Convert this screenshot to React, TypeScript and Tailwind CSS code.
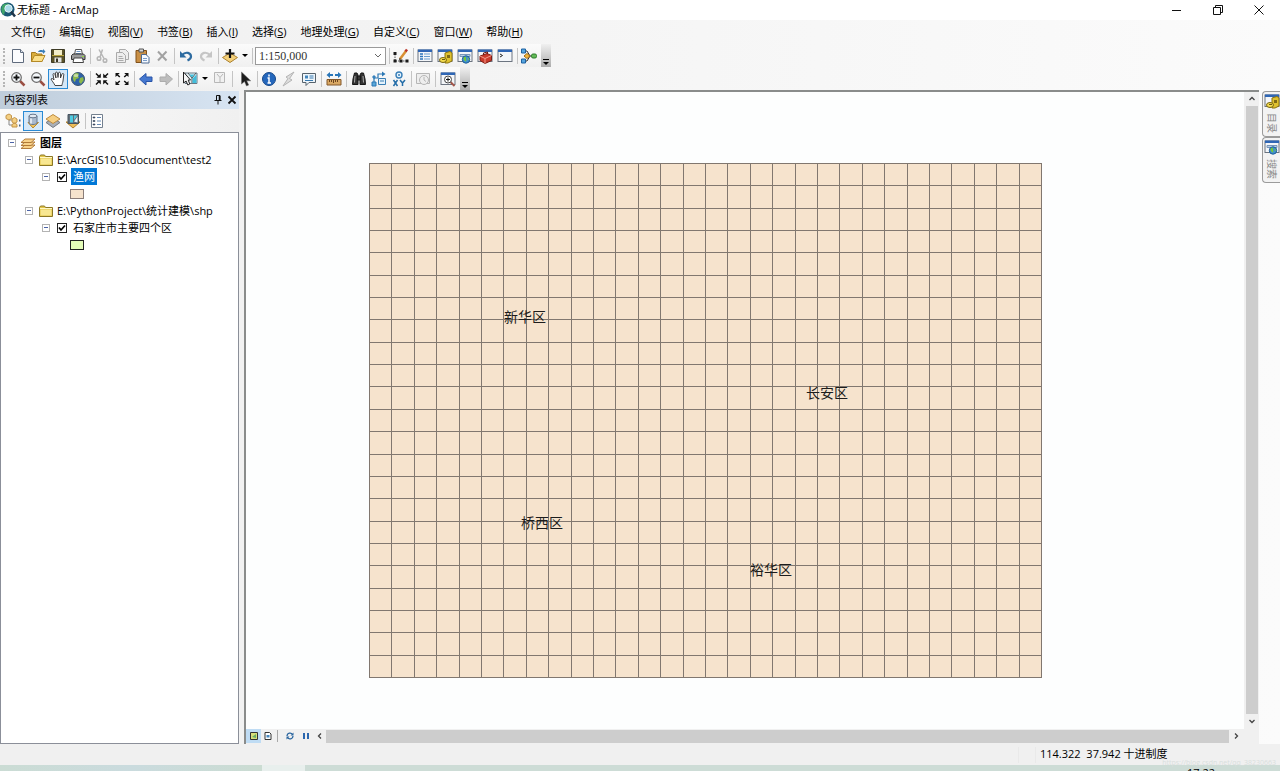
import { Fragment, type ReactNode } from "react";

const menus = [
  { label: "文件", key: "F" },
  { label: "编辑", key: "E" },
  { label: "视图", key: "V" },
  { label: "书签", key: "B" },
  { label: "插入", key: "I" },
  { label: "选择", key: "S" },
  { label: "地理处理", key: "G" },
  { label: "自定义", key: "C" },
  { label: "窗口", key: "W" },
  { label: "帮助", key: "H" },
];

const Icon = ({ children }: { children: ReactNode }) => (
  <svg viewBox="0 0 16 16" className="w-4 h-4 shrink-0" aria-hidden="true">
    {children}
  </svg>
);

const WindowFrame = () => (
  <>
    <rect x="1" y="2" width="14" height="11.5" fill="#f4f6f9" stroke="#6c7480" />
    <rect x="1" y="1.5" width="14" height="2.5" fill="#2f66b5" />
  </>
);

const icons: Record<string, ReactNode> = {
  new: (
    <>
      <path d="M2.500 1.500h8l3 3v10h-11z" fill="#fbfcfe" stroke="#5f6b7d" />
      <path d="M10.500 1.500v3h3" fill="#dfe6ef" stroke="#5f6b7d" />
    </>
  ),
  open: (
    <>
      <path d="M1.500 13.500V4.500h4l1.500 1.500h5v7.500z" fill="#d9ad3c" stroke="#a47a1c" />
      <path d="M1.500 13.500l3-6h10.500l-3 6z" fill="#fbe08a" stroke="#b58a26" />
      <path d="M8 4c1-2 3-2.500 5-1.500V1l2.500 2.500L13 6V4.500c-2-.8-3.500-.5-5-.5z" fill="#3b7fb8" />
    </>
  ),
  save: (
    <>
      <path d="M1.500 1.500h13v13h-13z" fill="#5b5328" stroke="#3d3a25" />
      <path d="M4 2h8v5H4z" fill="#f3edc9" />
      <path d="M4.500 9.500h7v5h-7z" fill="#e4e4e4" />
      <path d="M6 10.500h2v3.500H6z" fill="#38351f" />
      <path d="M2 7.500h12" stroke="#b8a43c" />
    </>
  ),
  print: (
    <>
      <path d="M4.500 7l1-5.500h6l1 5.500z" fill="#fff" stroke="#555" />
      <path d="M6.500 3.500h4M6 5.500h5" stroke="#6b95c6" />
      <path d="M1.500 7.500L3 6h10.500l1.500 1.500v4h-13.500z" fill="#9b9b9b" stroke="#333" />
      <path d="M4 10h8.500l1 4.500H3z" fill="#fff" stroke="#444" />
      <path d="M12 8.500h2" stroke="#8edb3a" />
    </>
  ),
  cut: (
    <g fill="none" stroke="#b5b5b5" strokeWidth="1.500">
      <path d="M5 1.500l5 9M8.500 1.500L6 9" />
      <circle cx="5" cy="10.500" r="1.800" />
      <circle cx="11" cy="12.500" r="1.800" />
    </g>
  ),
  copy: (
    <g fill="#eee" stroke="#aaa">
      <path d="M5.500 1.500h6l3 3v7h-9z" />
      <path d="M2.500 4.500h6l3 3v7h-9z" />
      <path d="M4.500 8.500h4M4.500 10.500h5M4.500 12.500h5" />
    </g>
  ),
  paste: (
    <>
      <path d="M2 2.500h10.500v12H2z" fill="#c98f45" stroke="#80511b" />
      <path d="M5 1h4.500v3H5z" fill="#d7d7d7" stroke="#555" />
      <path d="M7.500 6.500h4.500l3 3v5.500H7.500z" fill="#f5f9ff" stroke="#4e6a91" />
      <path d="M9 10.500h4M9 12.500h4" stroke="#7a9dc9" />
    </>
  ),
  remove: <path d="M4 3.500l8.500 9M12.500 3.500L4 12.500" stroke="#a2a2a2" strokeWidth="2" />,
  undo: (
    <>
      <path d="M4 7c4-4 9-2 9 1.500 0 2-1.500 3-3.500 4" fill="none" stroke="#2d6ba0" strokeWidth="2.200" />
      <path d="M2 3v6.500h6.500z" fill="#2d6ba0" />
    </>
  ),
  redo: (
    <>
      <path d="M12 7c-4-4-9-2-9 1.500 0 2 1.500 3 3.500 4" fill="none" stroke="#c5c5c5" strokeWidth="2.200" />
      <path d="M14 3v6.500H7.500z" fill="#c5c5c5" />
    </>
  ),
  addData: (
    <>
      <path d="M8 5l7.500 4.500L8 14.500.5 9.500z" fill="#f3cf78" stroke="#ab8130" />
      <path d="M8 1v9M3.500 5.500h9" stroke="#111" strokeWidth="2.200" />
    </>
  ),
  editor: (
    <>
      <path d="M2 6v7h12" fill="none" stroke="#555" strokeDasharray="1.500 1" />
      <path d="M.5 4h3v3h-3zM.5 11.500h3v3h-3zM6.500 11.500h3v3h-3zM12.500 11.500h3v3h-3z" fill="#1b1b1b" />
      <path d="M7 11l6-8" stroke="#d99033" strokeWidth="2.500" />
      <path d="M12.500 3.500L14 1.500" stroke="#bb3327" strokeWidth="2.500" />
      <path d="M6 12l.5-2 1.500 1z" fill="#222" />
    </>
  ),
  contents: (
    <>
      <WindowFrame />
      <path d="M3 6h3M3 8.500h3M3 11h3" stroke="#2c76bc" strokeWidth="1.500" />
      <path d="M7 6h6M7 8.500h6M7 11h6" stroke="#6a9fd0" />
    </>
  ),
  catalog: (
    <>
      <WindowFrame />
      <path d="M8 5l5-1.500 2 1.500v8l-4 2H8z" fill="#e0c22f" stroke="#8b7410" />
      <path d="M10 7h3v3h-3z" fill="#806b16" />
      <ellipse cx="6" cy="12" rx="3.500" ry="2.500" fill="#f4dc4f" stroke="#77640f" />
      <path d="M5 11.500h3" stroke="#6c5a0c" />
    </>
  ),
  search: (
    <>
      <WindowFrame />
      <path d="M3 6.500h10v2H3z" fill="#bcd1e8" stroke="#7795b9" />
      <circle cx="9" cy="11.500" r="3.700" fill="#3f90d0" stroke="#1e5e98" />
      <path d="M6.500 10c1-2 3-1 2.500 0s1 2 0 3.500C7.500 13 6.500 12 6.500 10zM10.500 9l1.500 2-1 1.500z" fill="#74c63d" />
    </>
  ),
  toolbox: (
    <>
      <WindowFrame />
      <path d="M3 8l7-2.500 4.500 2v5L8 15.500l-5-3z" fill="#c93a2b" stroke="#7d1d14" />
      <path d="M3 8l5 2.500 6.500-3M8 10.500v5" fill="none" stroke="#f19a8d" />
      <path d="M6.500 7V5l4-1v2" fill="none" stroke="#6e1912" />
    </>
  ),
  python: (
    <>
      <WindowFrame />
      <path d="M3 6l2.500 1.500L3 9" fill="none" stroke="#222" />
    </>
  ),
  model: (
    <>
      <path d="M3 3h3l3 5H3M3 13h3l3-5h3" fill="none" stroke="#333" />
      <path d="M.5 1h4v4h-4zM.5 11h4v4h-4z" fill="#55a4de" stroke="#1e62a2" />
      <path d="M3 8l3-2.500L9 8l-3 2.500z" fill="#efb63d" stroke="#a76c13" />
      <rect x="10.500" y="6" width="5" height="4" rx="1.500" fill="#62b957" stroke="#2c7d2a" />
    </>
  ),
  zoomIn: (
    <>
      <path d="M10 10l4.500 4.500" stroke="#9b5044" strokeWidth="2.500" />
      <circle cx="6.500" cy="6.500" r="4.800" fill="#f5f8fb" stroke="#6a6a6a" strokeWidth="1.200" />
      <path d="M6.500 3.500v6M3.500 6.500h6" stroke="#111" strokeWidth="1.800" />
    </>
  ),
  zoomOut: (
    <>
      <path d="M10 10l4.500 4.500" stroke="#9b5044" strokeWidth="2.500" />
      <circle cx="6.500" cy="6.500" r="4.800" fill="#f5f8fb" stroke="#6a6a6a" strokeWidth="1.200" />
      <path d="M3.500 6.500h6" stroke="#111" strokeWidth="1.800" />
    </>
  ),
  pan: (
    <path
      d="M5 14.500C4 12 1.500 9.500 1 8c.5-1 2-.5 3 1L3 3.500c0-1.300 1.500-1.300 2 0L6 7l-.5-5c.2-1.300 1.800-1.200 2 0L8 6.500 8.500 2c.3-1.200 1.800-1 2 .3L10.500 7l1.500-4c.5-1 1.800-.6 1.800.5L13 10c-.3 2-1 3-1 4.500z"
      fill="#fff"
      stroke="#333"
      strokeWidth=".9"
    />
  ),
  globe: (
    <>
      <circle cx="8" cy="8" r="6.500" fill="#2f62a8" stroke="#3c5570" />
      <path d="M4 3c2-1.500 4-1 5 0l-1 2 1 2-3 1-1 3C3 9.500 2 7 4 3zM10 7l3-1 .8 3-2.800 4-2-2z" fill="#8db94b" />
      <ellipse cx="6" cy="4.500" rx="2.500" ry="1.500" fill="#fff" opacity=".5" />
    </>
  ),
  fixedIn: (
    <g stroke="#111" fill="#111">
      <path d="M2 2.500L5 5.500M14 2.500L11 5.500M2 13.500L5 10.500M14 13.500L11 10.500" strokeWidth="1.500" />
      <path d="M6.800 2.500v4.300H2.500zM9.200 2.500v4.300H13.500zM6.800 13.500V9.200H2.500zM9.200 13.500V9.200H13.500z" stroke="none" />
    </g>
  ),
  fixedOut: (
    <g stroke="#111" fill="#111">
      <path d="M3 3.500L5.800 6M13 3.500L10.200 6M3 12.500L5.800 10M13 12.500L10.200 10" strokeWidth="1.500" />
      <path d="M1.500 6V2h4.300zM14.500 6V2h-4.300zM1.500 10v4h4.300zM14.500 10v4h-4.300z" stroke="none" />
    </g>
  ),
  back: <path d="M1.500 8L8 2.500V6h6v4.500H8v3.500z" fill="#4477cf" stroke="#2854a8" />,
  forward: <path d="M14.500 8L8 2.500V6H2v4.500h6v3.500z" fill="#bdbdbd" stroke="#acacac" />,
  selectFeatures: (
    <>
      <path d="M3 2h12v10.500H3z" fill="#e3eef2" stroke="#687985" />
      <path d="M6 2l4 5 4-5M10 7v5" fill="none" stroke="#555" />
      <path d="M7 3.500h5.500L10 6.500zM10.500 7.500l4-4v8.500h-4z" fill="#42bddb" />
      <path d="M1.500 1l7 8H6.200l1.600 4-2 1-1.700-4-2.600 2z" fill="#f6f6f6" stroke="#222" />
    </>
  ),
  clearSelection: (
    <g fill="#f1f1f1" stroke="#b7b7b7">
      <path d="M2.500 1.500h10v10h-10z" />
      <path d="M5 3l3 3.500L11 3M8 6.500v5" fill="none" />
    </g>
  ),
  selectElements: <path d="M4.500 1v12l3-2.500 2 4.500 2.200-1-2-4.200h4z" fill="#1c1c1c" stroke="#666" strokeWidth=".5" />,
  identify: (
    <>
      <circle cx="8" cy="8" r="6.500" fill="#2567bc" stroke="#174889" />
      <path d="M8 3.500v2M6.500 7H8v5M6.500 12h3.500" fill="none" stroke="#fff" strokeWidth="1.500" />
    </>
  ),
  hyperlink: <path d="M13 1L5 6l2 1.500L2 15l9-6-2.500-1.500L13 1z" fill="#dedede" stroke="#b4b4b4" />,
  htmlPopup: (
    <>
      <path d="M1.500 2.500h13v9H8l-3 3v-3H1.500z" fill="#edf5fb" stroke="#56626c" />
      <path d="M4 4.500h3v3H4z" fill="#4386bd" />
      <path d="M8.500 5h4M8.500 7h4M4 9.500h8" stroke="#397ab0" />
    </>
  ),
  measure: (
    <>
      <path d="M1 8.500h14v5.500H1z" fill="#d9a864" stroke="#84582a" />
      <path d="M3.500 9v2M5.500 9v2M7.500 9v3M9.500 9v2M11.500 9v2" stroke="#6a421c" />
      <path d="M.5 4L4 1v2h3v2H4v2zM15.500 4L12 1v2H9v2h3v2z" fill="#2875b8" />
    </>
  ),
  find: (
    <g fill="#333" stroke="#171717">
      <path d="M3.500 2h2.500l1 2v9.500H1.500L2 8zM12.500 2H10L9 4v9.500h5.500L14 8z" />
      <path d="M6.500 5h3v4h-3z" />
      <path d="M4 5L3.500 11.500M12 5l.5 6.500" stroke="#aaa" />
    </g>
  ),
  findRoute: (
    <>
      <path d="M3 13V7h4V3h5" fill="none" stroke="#2b77b4" strokeWidth="1.200" />
      <path d="M1 11h4v4H1zM2 5h2v2H2z" fill="#5aa7d8" stroke="#2b77b4" />
      <path d="M11 .5L14.500 3 11 5.500z" fill="#2b77b4" />
      <path d="M7.500 7.500h7v6h-7z" fill="#e3f1fb" stroke="#397eb4" />
      <path d="M9 10h4" stroke="#397eb4" />
    </>
  ),
  goToXY: (
    <>
      <circle cx="8" cy="4" r="3" fill="#eaf5fd" stroke="#397fb8" strokeWidth="1.400" />
      <circle cx="8" cy="4" r="1" fill="#397fb8" />
      <path d="M2.500 9l4 6M6.500 9l-4 6M9 9l2.500 3L14 9M11.500 12v3" fill="none" stroke="#246da8" strokeWidth="1.500" />
    </>
  ),
  timeSlider: (
    <g fill="#eee" stroke="#b6b6b6">
      <path d="M1.500 2.500h13v10h-13z" />
      <circle cx="9" cy="9" r="4.500" />
      <path d="M9 6V9l2 1.500" fill="none" />
    </g>
  ),
  viewer: (
    <>
      <WindowFrame />
      <path d="M10 10.500l4.500 4.500" stroke="#a3564a" strokeWidth="2" />
      <circle cx="8" cy="8.500" r="3.500" fill="#fff" stroke="#444" />
      <path d="M8 6.500v4M6 8.500h4" stroke="#111" />
    </>
  ),
  listOrder: (
    <>
      <path d="M4 4v8h4M4 7h4" fill="none" stroke="#888" />
      <path d="M1 2.500L4 1l2.500 1.500v3L4 7 1 5.500zM7 6l2.500-1.500L12 6v3l-2.500 1.500L7 9zM7 11.500l2.500-1.500 2.500 1.500V14H7z" fill="#f4cf82" stroke="#c39549" />
      <path d="M14 7.500h1.500M14 12.500h1.500" stroke="#44658c" strokeWidth="2" />
    </>
  ),
  listSource: (
    <>
      <path d="M3 9.500h10.500L8 15z" fill="#f0c35a" stroke="#b98a2e" />
      <path d="M4 3v7c1.500 2 6.500 2 8 0V3z" fill="#a9b9cd" stroke="#68798f" />
      <ellipse cx="8" cy="3" rx="4" ry="1.800" fill="#e3eaf3" stroke="#68798f" />
      <path d="M6 5.500v5" stroke="#f3f6fa" strokeWidth="1.500" />
    </>
  ),
  listVisible: (
    <>
      <path d="M1 9.500l7-4 7 4L8 14.500z" fill="#a9afb7" stroke="#767b83" />
      <path d="M1 6l7-4.500L15 6l-7 4.500z" fill="#f6cf82" stroke="#bd8b3f" />
    </>
  ),
  listSelection: (
    <>
      <path d="M1 9h14l-7 6z" fill="#edbd59" stroke="#b4822d" />
      <path d="M3 1.500h10.500v9H3z" fill="#626e79" stroke="#465460" />
      <path d="M5 2.500h3v7H5zM9 2.500h3.500L9 7z" fill="#4ccce2" />
      <path d="M9 8.500l3.500-5v6z" fill="#e9f2f5" />
    </>
  ),
  options: (
    <>
      <path d="M2.500 1.500h11v13h-11z" fill="#fff" stroke="#73808f" />
      <path d="M4 4h2v1H4zM4 7.500h2v1H4zM4 11h2v1H4z" fill="#3c4c61" stroke="#3c4c61" strokeWidth=".6" />
      <path d="M8 4.500h4M8 8h4M8 11.500h4" stroke="#6589b4" />
    </>
  ),
  layers: (
    <g fill="#f8d28a" stroke="#aa7230" strokeWidth=".9">
      <path d="M1 13.500l4-3.500h10l-4 3.500z" />
      <path d="M1 10.500L5 7h10l-4 3.500z" />
      <path d="M1 7.500L5 4h10l-4 3.500z" />
    </g>
  ),
  folder: (
    <>
      <path d="M1.500 13.500v-9l1-1.500h4l1 1.500h7v9z" fill="#e2c548" stroke="#8b7726" />
      <path d="M2.500 6.500h11v6h-11z" fill="#f8e792" />
      <path d="M2 5.500h12" stroke="#fff7c5" />
    </>
  ),
};

type ToolItem = { icon?: string; label?: string; kind?: "sep" | "wideSep" | "arrow" | "scale"; active?: boolean };
const sep: ToolItem = { kind: "sep" };
const wideSep: ToolItem = { kind: "wideSep" };

const standardTools: ToolItem[] = [
  { icon: "new", label: "新建" },
  { icon: "open", label: "打开" },
  { icon: "save", label: "保存" },
  { icon: "print", label: "打印" },
  sep,
  { icon: "cut", label: "剪切" },
  { icon: "copy", label: "复制" },
  { icon: "paste", label: "粘贴" },
  { icon: "remove", label: "删除" },
  sep,
  { icon: "undo", label: "撤消" },
  { icon: "redo", label: "恢复" },
  sep,
  { icon: "addData", label: "添加数据" },
  { kind: "arrow", label: "添加数据选项" },
  sep,
  { kind: "scale" },
  sep,
  { icon: "editor", label: "编辑器工具条" },
  sep,
  { icon: "contents", label: "内容列表" },
  { icon: "catalog", label: "目录" },
  { icon: "search", label: "搜索" },
  { icon: "toolbox", label: "ArcToolbox" },
  { icon: "python", label: "Python" },
  sep,
  { icon: "model", label: "模型构建器" },
];

const navigationTools: ToolItem[] = [
  { icon: "zoomIn", label: "放大" },
  { icon: "zoomOut", label: "缩小" },
  { icon: "pan", label: "平移", active: true },
  { icon: "globe", label: "全图" },
  sep,
  { icon: "fixedIn", label: "固定比例放大" },
  { icon: "fixedOut", label: "固定比例缩小" },
  sep,
  { icon: "back", label: "返回" },
  { icon: "forward", label: "前进" },
  sep,
  { icon: "selectFeatures", label: "选择要素" },
  { kind: "arrow", label: "选择方式" },
  { icon: "clearSelection", label: "清除所选要素" },
  wideSep,
  { icon: "selectElements", label: "选择元素" },
  sep,
  { icon: "identify", label: "识别" },
  { icon: "hyperlink", label: "超链接" },
  { icon: "htmlPopup", label: "HTML 弹出窗口" },
  wideSep,
  { icon: "measure", label: "测量" },
  wideSep,
  { icon: "find", label: "查找" },
  { icon: "findRoute", label: "查找路径" },
  { icon: "goToXY", label: "转到 XY" },
  sep,
  { icon: "timeSlider", label: "时间滑块" },
  wideSep,
  { icon: "viewer", label: "创建查看器窗口" },
];

const Separator = ({ wide }: { wide?: boolean }) => (
  <span className={`flex justify-center shrink-0 ${wide ? "w-[5px]" : "w-1"}`}>
    <span className="w-px h-4 bg-[#c4c4c4]" />
  </span>
);

const ToolButton = ({ icon, label, active }: ToolItem) => (
  <button
    aria-label={label}
    className={`w-5 h-5 flex items-center justify-center shrink-0 ${
      active ? "bg-[#d5e8f8] border border-[#2a8ad4]" : ""
    }`}
  >
    <Icon>{icons[icon!]}</Icon>
  </button>
);

const ScaleSelect = () => (
  <div className="relative mx-px">
    <select
      aria-label="地图比例"
      className="block appearance-none w-[131px] h-[18px] pl-[3px] bg-white border border-[#9a9a9a] text-[12px] leading-4 text-[#333] font-['Liberation_Serif',serif]"
    >
      <option>1:150,000</option>
    </select>
    <svg viewBox="0 0 8 6" className="absolute right-1 top-1.5 w-2 h-1.5 pointer-events-none">
      <path d="M1 1l3 3 3-3" fill="none" stroke="#666" />
    </svg>
  </div>
);

const Toolbar = ({ items, name }: { items: ToolItem[]; name: string }) => (
  <div className="flex" role="toolbar" aria-label={name}>
    <div className="h-[23px] flex items-center bg-linear-to-b from-[#fbfbfb] to-[#f0f0f0] pr-0.5">
      <span className="w-2 flex justify-center">
        <span className="h-4 border-l-2 border-dotted border-[#b5b5b5]" />
      </span>
      {items.map((item, i) => (
        <Fragment key={i}>
          {item.kind === "sep" && <Separator />}
          {item.kind === "wideSep" && <Separator wide />}
          {item.kind === "scale" && <ScaleSelect />}
          {item.kind === "arrow" && (
            <button aria-label={item.label} className="w-2.5 h-5 flex items-center justify-center">
              <span className="border-x-3 border-t-3 border-x-transparent border-t-black" />
            </button>
          )}
          {!item.kind && <ToolButton {...item} />}
        </Fragment>
      ))}
    </div>
    <button
      aria-label="工具条选项"
      className="w-2.5 h-[23px] flex flex-col items-center justify-end gap-0.5 pb-0.5 bg-linear-to-b from-[#f0f0f0] to-[#adadad]"
    >
      <span className="w-1.5 h-px bg-black" />
      <span className="border-x-3 border-t-3 border-x-transparent border-t-black" />
    </button>
  </div>
);

const TitleBar = () => (
  <header className="h-5 bg-white flex items-center">
    <svg viewBox="0 0 16 16" className="w-4 h-4">
      <circle cx="7.500" cy="7.500" r="7" fill="#1b5876" />
      <path d="M2 4c2-3 6-3 8-1L8 5l1 2-4 2-1 4C1 11 1 7 2 4z" fill="#3fa46b" />
      <circle cx="8.500" cy="6.500" r="3.700" fill="#a9dbea" stroke="#e5f2f6" />
      <path d="M11 9.500l4 5" stroke="#20364a" strokeWidth="2.500" />
    </svg>
    <h1 className="pl-px text-[11px] leading-5 flex-1">无标题 - ArcMap</h1>
    <div className="flex items-center">
      <button aria-label="最小化" className="w-[41px] h-5 flex items-center justify-center">
        <svg viewBox="0 0 10 10" className="w-2.5 h-2.5">
          <path d="M0 5.500h9" stroke="#111" />
        </svg>
      </button>
      <button aria-label="还原" className="w-[41px] h-5 flex items-center justify-center">
        <svg viewBox="0 0 10 10" className="w-2.5 h-2.5" fill="none" stroke="#111">
          <path d="M.5 2.500h7v7h-7zM2.500 2.500v-2h7v7h-2" />
        </svg>
      </button>
      <button aria-label="关闭" className="w-[42px] h-5 flex items-center justify-center">
        <svg viewBox="0 0 10 10" className="w-2.5 h-2.5">
          <path d="M.5.5l9 9M9.500.5l-9 9" stroke="#111" />
        </svg>
      </button>
    </div>
  </header>
);

const Expander = () => (
  <button aria-label="折叠" className="w-2 h-2 border border-[#b3b3b3] bg-white flex items-center justify-center shrink-0">
    <span className="w-1 h-px bg-[#4b63a7]" />
  </button>
);

const LayerRow = ({ id, name, selected }: { id: string; name: string; selected?: boolean }) => (
  <div className="h-[17px] pl-[41px] flex items-center">
    <Expander />
    <span className="ml-[7px] w-2.5 h-2.5 grid shrink-0">
      <input
        id={id}
        type="checkbox"
        defaultChecked
        className="peer col-start-1 row-start-1 appearance-none w-2.5 h-2.5 border border-[#222] bg-white"
      />
      <svg
        viewBox="0 0 10 10"
        className="col-start-1 row-start-1 w-2.5 h-2.5 pointer-events-none invisible peer-checked:visible"
      >
        <path d="M2 4.500l2 2.500 4-4.500" fill="none" stroke="#000" strokeWidth="1.700" />
      </svg>
    </span>
    <label htmlFor={id} className={`ml-1 px-0.5 leading-[17px] ${selected ? "bg-[#0078d7] text-white" : ""}`}>
      {name}
    </label>
  </div>
);

const SourceRow = ({ path }: { path: string }) => (
  <div className="h-[17px] pl-6 flex items-center">
    <Expander />
    <span className="ml-[5px] mr-[3px] flex">
      <Icon>{icons.folder}</Icon>
    </span>
    <span>{path}</span>
  </div>
);

const listButtons = [
  { icon: "listOrder", label: "按绘制顺序列出" },
  { icon: "listSource", label: "按源列出", active: true },
  { icon: "listVisible", label: "按可见性列出" },
  { icon: "listSelection", label: "按选择列出" },
];

const ContentsPanel = () => (
  <aside className="w-[239px] shrink-0 flex flex-col pt-px">
    <div className="h-[18px] pl-1 flex items-center bg-linear-to-r from-[#bfcddb] to-[#d7e4f2]">
      <h2 className="flex-1 text-[11px]">内容列表</h2>
      <button aria-label="自动隐藏" className="w-3.5 flex justify-center">
        <svg viewBox="0 0 10 10" className="w-2.5 h-2.5" fill="none" stroke="#111">
          <path d="M3.500 5.500v-5h3.500v5M1.500 5.500h7M5 5.500V9.500" />
          <path d="M6.500 1v4.500" strokeWidth="1.500" />
        </svg>
      </button>
      <button aria-label="关闭面板" className="w-3.5 flex justify-center">
        <svg viewBox="0 0 10 10" className="w-2.5 h-2.5">
          <path d="M1.500 1.500l7 7M8.500 1.500l-7 7" stroke="#111" strokeWidth="1.800" />
        </svg>
      </button>
    </div>
    <div className="h-[23px] pl-[3px] flex items-center bg-linear-to-r from-[#fafafa] to-[#f0f0f0]">
      {listButtons.map((b) => (
        <ToolButton key={b.icon} {...b} />
      ))}
      <Separator />
      <ToolButton icon="options" label="选项" />
    </div>
    <div className="flex-1 border border-[#8b8f99] bg-white pt-px text-[11px] leading-[17px]">
      <div className="h-[17px] pl-[7px] flex items-center">
        <Expander />
        <span className="mx-1 flex">
          <Icon>{icons.layers}</Icon>
        </span>
        <span className="font-bold">图层</span>
      </div>
      <SourceRow path="E:\ArcGIS10.5\document\test2" />
      <LayerRow id="layer-fishnet" name="渔网" selected />
      <div className="h-[17px] pl-[69px] flex items-center">
        <span className="w-3.5 h-2.5 bg-[#f6e3cd] border border-[#8b7e7a]" />
      </div>
      <SourceRow path="E:\PythonProject\统计建模\shp" />
      <LayerRow id="layer-districts" name="石家庄市主要四个区" />
      <div className="h-[17px] pl-[69px] flex items-center">
        <span className="w-3.5 h-2.5 bg-[#e4fcb8] border border-[#222]" />
      </div>
    </div>
  </aside>
);

const COLS = 30;
const ROWS = 23;
const MAP_W = 672;
const MAP_H = 514;

const gridPath = [
  ...Array.from({ length: COLS + 1 }, (_, i) => `M${Math.round((i * MAP_W) / COLS) + 0.5} 0V${MAP_H + 1}`),
  ...Array.from({ length: ROWS + 1 }, (_, i) => `M0 ${Math.round((i * MAP_H) / ROWS) + 0.5}H${MAP_W + 1}`),
].join("");

const MapView = () => (
  <div className="flex-1 min-w-0 bg-[#fdfefe] pt-[71px] pl-[123px] overflow-hidden">
    <div className="relative w-[673px] text-[14px] leading-5 text-[#1c1c1c]">
      <svg viewBox="0 0 673 515" className="block w-[673px] h-[515px]">
        <rect width="673" height="515" fill="#f6e3cd" />
        <path d={gridPath} stroke="#81776f" />
      </svg>
      <span className="absolute left-[135px] top-[144px]">新华区</span>
      <span className="absolute left-[437px] top-[220px]">长安区</span>
      <span className="absolute left-[152px] top-[350px]">桥西区</span>
      <span className="absolute left-[381px] top-[397px]">裕华区</span>
    </div>
  </div>
);

const Chevron = ({ d, label }: { d: string; label: string }) => (
  <button aria-label={label} className="w-[13px] h-[14px] flex items-center justify-center shrink-0 bg-[#f0f0f0]">
    <svg viewBox="0 0 8 8" className="w-2 h-2">
      <path d={d} fill="none" stroke="#444" strokeWidth="1.300" />
    </svg>
  </button>
);

const ViewControls = () => (
  <div className="h-[15px] pr-0.5 flex items-start bg-[#f0f0f0]">
    <button aria-label="数据视图" className="w-[15px] h-[14px] flex items-center justify-center bg-[#bfdcf4]">
      <svg viewBox="0 0 8 8" className="w-2 h-2">
        <path d="M.5.5h7v7h-7z" fill="#d7df79" stroke="#333" />
        <path d="M2 5l4-3v4z" fill="#65ab65" />
      </svg>
    </button>
    <button aria-label="布局视图" className="w-[14px] h-[14px] flex items-center justify-center">
      <svg viewBox="0 0 8 8" className="w-2 h-2">
        <path d="M1 .5h4.500l1.500 1.500v5.500H1z" fill="#fff" stroke="#333" />
        <path d="M2.500 3h3v2.500h-3z" fill="#4586bd" />
      </svg>
    </button>
    <span className="w-1 h-[14px] flex items-center justify-center">
      <span className="w-px h-3 bg-[#a8a8a8]" />
    </span>
    <button aria-label="刷新" className="ml-0.5 w-[18px] h-[14px] flex items-center justify-center">
      <svg viewBox="0 0 8 8" className="w-2 h-2" fill="none" stroke="#28649e" strokeWidth="1.300">
        <path d="M1 4c0-3 4-4 5.500-1.500M7 4c0 3-4 4-5.500 1.500" />
        <path d="M7.500.5v3h-3zM.5 7.500v-3h3z" fill="#28649e" stroke="none" />
      </svg>
    </button>
    <button aria-label="暂停绘制" className="w-[14px] h-[14px] flex items-center justify-center gap-0.5">
      <span className="w-0.5 h-1.5 bg-[#2c67ae]" />
      <span className="w-0.5 h-1.5 bg-[#2c67ae]" />
    </button>
    <Chevron label="向左滚动" d="M5 1.500L2.500 4 5 6.500" />
    <div className="flex-1 h-[13px] mt-px bg-[#cdcdcd]" />
    <Chevron label="向右滚动" d="M3 1.500L5.500 4 3 6.500" />
  </div>
);

const DockTab = ({ icon, label }: { icon: string; label: string }) => (
  <button className="h-[46px] w-[18px] flex flex-col items-center gap-1 pt-px rounded-l-sm border border-r-0 border-[#9b9b9b] bg-[#f3f3f3]">
    <Icon>{icons[icon]}</Icon>
    <span className="[writing-mode:vertical-rl] [text-orientation:sideways] text-[10px] leading-4 text-[#888]">{label}</span>
  </button>
);

export default function App() {
  return (
    <div className="min-h-screen flex flex-col overflow-hidden bg-[#f0f0f0] text-black font-['Open_Sans','Noto_Sans_CJK_SC',sans-serif]">
      <TitleBar />
      <div className="bg-linear-to-r from-[#f0f0f0] to-[#fbfbfb]">
        <nav className="h-6 px-[11px] flex items-center gap-3.5 text-[11px] whitespace-nowrap">
          {menus.map((m) => (
            <button key={m.key}>
              {m.label}(<span className="underline">{m.key}</span>)
            </button>
          ))}
        </nav>
        <Toolbar name="标准工具" items={standardTools} />
        <Toolbar name="工具" items={navigationTools} />
      </div>
      <main className="flex-1 flex bg-linear-to-r from-[#f0f0f0] to-[#fbfbfb]">
        <ContentsPanel />
        <section className="ml-[5px] flex-1 min-w-0 flex border-t-2 border-l-2 border-[#8a8c8b]">
          <div className="flex-1 min-w-0 flex flex-col">
            <MapView />
            <ViewControls />
          </div>
          <div className="w-[15px] pb-4 flex flex-col items-center bg-[#f0f0f0]">
            <Chevron label="向上滚动" d="M1.500 5L4 2.500 6.500 5" />
            <div className="flex-1 w-3 bg-[#cdcdcd]" />
            <Chevron label="向下滚动" d="M1.500 3L4 5.500 6.500 3" />
          </div>
        </section>
        <div className="pl-[3px] pt-px flex flex-col">
          <DockTab icon="catalog" label="目录" />
          <DockTab icon="search" label="搜索" />
        </div>
      </main>
      <footer>
        <div className="h-[21px] flex items-center justify-end bg-[#f0f0f0] text-[11px]">
          <span className="w-[18px] h-4 border-x border-[#e9e9e9]" />
          <span className="w-[244px] pl-1 whitespace-pre">114.322  37.942 十进制度</span>
        </div>
        <div className="relative h-1.5 flex bg-[#cddcd6]">
          <span className="w-[262px] bg-linear-to-r from-[#cbdcd4] via-[#cadbde] to-[#cbdcd2]" />
          <span className="w-[43px] bg-[#e8efed]" />
          <span className="flex-1 flex justify-end pr-[65px] h-1.5 overflow-hidden text-[11px] leading-4">17:22</span>
          <span className="absolute right-1 -top-2 text-[7px] leading-3 text-[#d9dfdd]">
            https://blog.csdn.net/qq_38230663
          </span>
        </div>
      </footer>
    </div>
  );
}
